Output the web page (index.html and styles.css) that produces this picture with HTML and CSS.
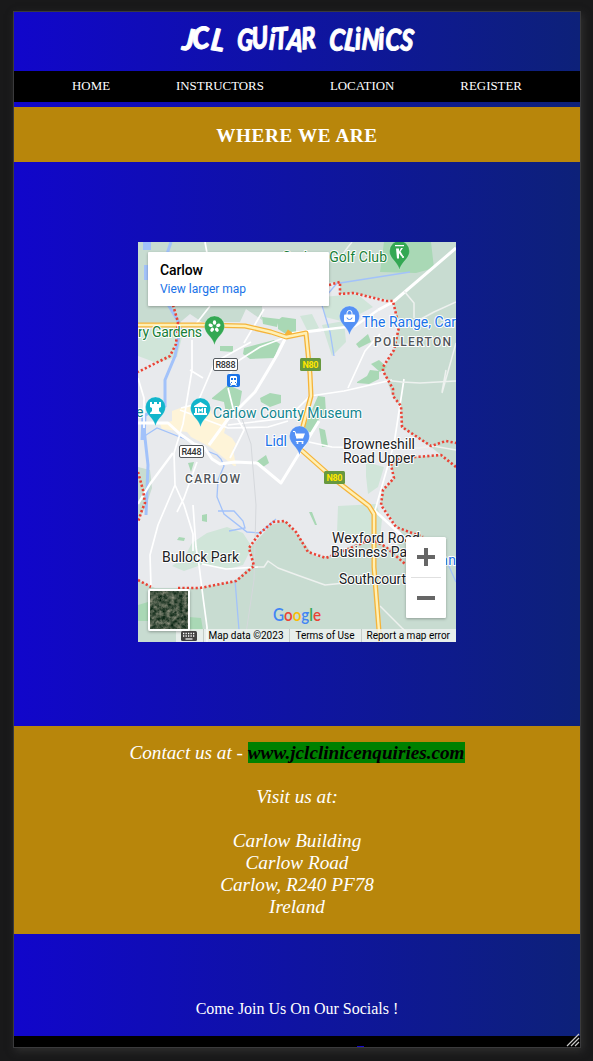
FILE: index.html
```html
<!DOCTYPE html>
<html lang="en">
<head>
<meta charset="utf-8">
<title>JCL Guitar Clinics - Location</title>
<link rel="stylesheet" href="styles.css">
</head>
<body>
<div class="window">
  <header class="banner">
    <h1 class="visual-title"><svg class="logo" viewBox="0 0 240 36" role="img" aria-label="JCL Guitar Clinics">
      <g transform="translate(4.5 28.5)">
        <text class="brush" x="0" y="0" rotate="8 -5 9" textLength="42" lengthAdjust="spacingAndGlyphs">JCL</text>
        <text class="brush" x="55" y="0" rotate="5 -6 4 -3 8 -5" textLength="80" lengthAdjust="spacingAndGlyphs">GUiTAR</text>
        <text class="brush" x="147" y="0" rotate="6 8 -3 4 -4 5 8" textLength="84" lengthAdjust="spacingAndGlyphs">CLiNiCS</text>
      </g>
    </svg></h1>
  </header>
  <nav class="menu">
    <a>HOME</a><a>INSTRUCTORS</a><a>LOCATION</a><a>REGISTER</a>
  </nav>
  <h2 class="heading">WHERE WE ARE</h2>
  <main class="map-section">
    <svg class="map" viewBox="138 242 318 400">
      <defs>
        <path id="pin" d="M0 0C-1.5-8-10-11-10-19a10 10 0 1 1 20 0C10-11 1.5-8 0 0z"/>
        <filter id="shadow" x="-20%" y="-20%" width="140%" height="150%"><feDropShadow dx="0" dy="1" stdDeviation="1.5" flood-opacity=".3"/></filter>
        <filter id="aerial" x="0" y="0" width="100%" height="100%" color-interpolation-filters="sRGB">
          <feTurbulence type="fractalNoise" baseFrequency=".24" numOctaves="4" seed="8"/>
          <feColorMatrix values=".8 0 0 0 -.13  .65 0 0 0 .01  .65 0 0 0 -.06  0 0 0 0 1"/>
        </filter>
      </defs>
      <rect x="138" y="242" width="318" height="400" fill="#e8eaed"/>
      <g fill="#c8dcd1">
        <path d="M138 242H456V642H138V580L155 588H200L235 581 253 563 250 548 271 525 285 521 298 535 314 556 326 557 358 543 372 540 390 548 406 540 381 503 383 490 394 478 391 465 402 460 416 457 441 455 431 447 402 428 401 407 393 397 383 370 394 350 399 327 393 301 354 293 340 294 340 283 298 281V306H262V320L246 309 240 322H202L190 314 177 325H138z"/>
        <path d="M138 467L150 470 152 488 146 506 138 520z"/>
      </g>
      <g fill="#d0e5d9">
        <path d="M138 332l18-4 20-3 6 12-5 20-20 6-19-7zM300 316l12-2 7 14-11 4zM322 297l35-3 16 13-28 15-20-5zM322 325l22-4 2 21-14 14zM184 558l8-15 15-10 20-6 16 6 9 14-9 18-14 4-25-5-20 7-12-5zM350 536l-16-20zM366 462l18 5-6 20-10 7-2-18zM338 506l38-2 6 15-2 20-43-6z"/>
      </g>
      <g fill="#a9d8b5">
        <path d="M380 272l4-30h47l3 26-18 5zM262 317l17 2-2 8-14-3zM278 320l4-3 14 2v16l-10-1-8-5zM220 346h13v6l-13-1zM244 348l30-8 6 4-6 14-24 1-7-5zM212 398l16-13 14 6-3 18-13 4-2-11-12-3zM260 398l10-5 11 2v8l-11 4-9-5zM356 344l12-10 3 8-12 6zM371 364l8-4 8 7-7 5zM357 382l10-6 3-6 9 1v8l-10 5-12-1zM318 396l7 1 1 16-7 6-6 14-10-3zM319 428l6 2 3 16-6 1zM256 462l10-7 3 8-6 4zM188 463l6-1-3 10zM202 515l5-1v8l-5-1zM179 537l6 1-1 3-7-1zM309 512l3 0 5 13-2 0zM138 605l10-3v19h-10zM189 617l12 1 2 12-13 1z"/>
      </g>
      <path fill="#fef4d8" d="M172 411l14-5 24-1 2 9 16 5-4 14 8 5 4 6-3 5 3 17-2 0-24-19-19-10-4-5-25-3-2-5 12-3z"/>
      <g fill="none" stroke="#a2c2fa">
        <path stroke-width="8" d="M147 242v8M148 265v15"/>
        <path stroke-width="3" d="M171 242l-4 12M166 301l15 25-6 30-10 24v26l-22 10 2 22 3 27-2 50"/>
        <path stroke-width="5" d="M144 415l-1 25"/>
        <path stroke-width="1.300" d="M143 437l14-9 28 11 22 12 10 4 4 4 3 7-6 14-1 17 7 17 23 18 13 1 16-14M218 511l16 0 9 10 2 7-16 3M340 283l70-11M338 282l-17 20 9 30 4 24M235 580l4 50M447 562l9 20"/>
      </g>
      <g fill="none" stroke="#fff" stroke-width="1.700" stroke-linejoin="round">
        <path stroke-width="3" d="M456 248l-63 54-15 8M321 330l-34 4M286 337l-9 18-10 17-12 20-27 27-19 26M138 423h30l12 11 14 10 10 3 8 12 8 5 15-2 22 1 24 20 38-62"/>
        <path stroke-width="2.400" d="M378 310l-23 16-34 4M173 453l-23 31-12 20M374 510l24 22 28 24"/>
        <path d="M205 242l2 11M210 306l-14 18M192 340v30l-9 54-9 29M190 370l13 8M138 378l6 20v30M251 342l-36 20-18 42-16 4M244 343l20-34M286 337l-26 10-22 14-10 16M180 410l48 18 40-1 20-6M228 388l6 24 10 18-14 28M228 425l60-7 22-22 34-5 48-11M174 453l1 32 9 20 9 29v17M175 485l-17 40-8 30 1 32M197 462l-13 36-7 14M193 505l3 42 3 18 4 32 4 30v15M202 564l24 5 32-2M309 442l23 5 60 1M348 388l17-37 15-17M404 379l-10 65-20 70"/>
      </g>
      <g fill="none" stroke="#eef1ef" stroke-width="1.500" stroke-linejoin="round">
        <path d="M404 291l10 12v15M456 302l-22 10-26 14M456 343l-14 50M446 370l-4 22M384 380l18 2 18 1 36-2M392 448h27l14-2 23 4M258 567l6 0 4-6 10 7 19 7 28 10 30-3M380 606l22 22 16 14M340 258l8-11 4-5"/>
      </g>
      <g fill="none" stroke="#d5d8dc"><path d="M239 410l12 34 5 61-2 75-9 60"/></g>
      <g fill="none" stroke-linejoin="round">
        <path stroke="#f5b43a" stroke-width="5" d="M138 325l62 0 45 1 26 6 15 5 20-4 4 41 1 22-8 30-4 22 35 31 35 27 5 8v53l5 64 2 14M286 337l4-6"/>
        <path stroke="#fff0b5" stroke-width="2.400" d="M138 325l62 0 45 1 26 6 15 5 20-4 4 41 1 22-8 30-4 22 35 31 35 27 5 8v53l5 64 2 14"/>
        <path class="boundary" d="M173 305l5 17-2 22-6 12-32 16M138 472l5 18 2 13-3 7-4 12M138 580l13 7M178 588l22 0 36-7 18-15-5-18 10-14 14-12 12-1 11 11 12 20 18 6 32-13 13-6 15 8 19 17M329 285l11-3v12l14-1 32 8h7l6 26-5 23-11 17 0 4 10 18v7l8 10 1 21 29 19 15-5 10 2M456 467l-15-12-25 2-15 0-10 8 3 13-11 12-2 15 15 22 27 10"/>
      </g>
      <g class="place green">
        <text x="282" y="261.500" textLength="105">Carlow Golf Club</text>
        <text x="138" y="336.500" textLength="64">ry Gardens</text>
      </g>
      <g class="place blue">
        <text x="362" y="326.500" textLength="94">The Range, Car</text>
        <text x="265" y="446" textLength="22">Lidl</text>
        <text x="440" y="565" textLength="16">nn</text>
      </g>
      <g class="place teal">
        <text x="213" y="418" textLength="149">Carlow County Museum</text>
        <text x="136" y="417">e</text>
      </g>
      <g class="place area">
        <text x="343" y="449" textLength="72">Browneshill</text>
        <text x="343" y="463" textLength="72">Road Upper</text>
        <text x="162" y="562" textLength="77">Bullock Park</text>
        <text x="332" y="543" textLength="88">Wexford Road</text>
        <text x="331" y="556.500" textLength="88">Business Park</text>
        <text x="339" y="584" textLength="67">Southcourt</text>
      </g>
      <g class="district">
        <text x="374" y="346" textLength="77">POLLERTON</text>
        <text x="185" y="483" textLength="55">CARLOW</text>
      </g>
      <g fill="#fff" stroke="#555a5f">
        <rect x="213.500" y="358.500" width="24" height="12" rx="1.500"/><rect x="179.500" y="445.500" width="24" height="12" rx="1.500"/>
      </g>
      <g class="route"><text x="215.500" y="368" textLength="20">R888</text><text x="181.500" y="455" textLength="20">R448</text></g>
      <g fill="#67983f"><rect x="300" y="358" width="21" height="13" rx="1.500"/><rect x="324" y="471" width="21" height="13" rx="1.500"/></g>
      <g class="route national"><text x="302.500" y="368" textLength="16">N80</text><text x="326.500" y="481.200" textLength="16">N80</text></g>
      <g>
        <rect x="227" y="374" width="13" height="13" rx="2" fill="#1a73e8"/>
        <path fill="#fff" d="M231 376h5l1 1v6l-1 1 1 2h-1l-1-1h-3l-1 1h-1l1-2-1-1v-6z"/><path fill="#1a73e8" d="M231 378h2v2h-2zM234 378h2v2h-2zM231 382h1v1h-1zM235 382h1v1h-1z"/>
      </g>
      <g stroke="#fff" stroke-opacity=".35" stroke-width=".6">
        <use href="#pin" x="399.500" y="270" fill="#34a853"/><use href="#pin" x="214.500" y="345" fill="#34a853"/>
        <use href="#pin" x="349.500" y="335" fill="#5491f5"/><use href="#pin" x="299.500" y="455" fill="#5491f5"/>
        <use href="#pin" x="155.500" y="426" fill="#12b5cb"/><use href="#pin" x="200.500" y="427" fill="#12b5cb"/>
      </g>
      <g fill="#fff">
        <ellipse cx="214.500" cy="322.500" rx="1.700" ry="2.200"/>
        <ellipse cx="214.500" cy="322.500" rx="1.700" ry="2.200" transform="rotate(72 214.500 326.500)"/>
        <ellipse cx="214.500" cy="322.500" rx="1.700" ry="2.200" transform="rotate(144 214.500 326.500)"/>
        <ellipse cx="214.500" cy="322.500" rx="1.700" ry="2.200" transform="rotate(216 214.500 326.500)"/>
        <ellipse cx="214.500" cy="322.500" rx="1.700" ry="2.200" transform="rotate(288 214.500 326.500)"/>
        <rect x="344" y="314.500" width="11" height="7.500" rx="1"/>
        <path d="M150 402h2v2h2v-2h3v2h2v-2h2v5l-2 1v3l2 2v1h-11v-1l2-2v-3l-2-1z"/>
        <path d="M194 406l6.500-4 6.500 4v1h-13zM195 408h2v5h7v-5h2v5h1v2h-13v-2h1zM198 407.500l2.500 2 2.500-2v5h-1.500v-2l-1 1-1-1v2H198z"/>
        <path d="M295 433.500h10l-2 5h-6.500zM296.500 441h7v1h-8z"/><circle cx="297.500" cy="443" r="1"/><circle cx="302.500" cy="443" r="1"/>
        <path d="M395 245h9v1.300h-9zM396 248.500h3v10h-2zM401 248h2l-2.500 3.500 3 5h-2l-3-4z"/><circle cx="403" cy="257" r="1.100"/>
      </g>
      <g fill="none" stroke="#fff"><path d="M347 315v-2a2.500 2.500 0 0 1 5 0v2M293 431.500h2l2 7"/></g>
      <path d="M347 317.500a2.500 2 0 0 0 5 0" fill="none" stroke="#5491f5"/>
      <rect x="148" y="252" width="181" height="54" rx="1" fill="#fff" filter="url(#shadow)"/>
      <g class="card"><text class="card-name" x="160" y="275" textLength="43">Carlow</text><text class="card-link" x="160" y="293" textLength="86">View larger map</text></g>
      <path d="M176 629h280v13H176z" fill="#f1f4f3" fill-opacity=".75"/>
      <path d="M203.500 629v13M289.500 629v13M361.500 629v13" stroke="#c4ccc8"/>
      <rect x="148" y="589" width="42" height="42" rx="2" fill="#fff" filter="url(#shadow)"/>
      <rect x="150" y="591" width="38" height="38" filter="url(#aerial)"/>
      <rect x="181" y="631" width="16" height="10" rx="1.500" fill="#424242"/>
      <path d="M183 633.500h12M183 636h12" stroke="#fff" stroke-width="1.300" stroke-dasharray="1.300 1.200"/><path d="M185.500 639h7" stroke="#fff" stroke-width="1.200"/>
      <g class="legal">
        <text x="208.500" y="639" textLength="75">Map data ©2023</text><text x="295.500" y="639" textLength="59">Terms of Use</text><text x="366.500" y="639" textLength="83.500">Report a map error</text>
      </g>
      <text class="google" x="273" y="621" textLength="48" lengthAdjust="spacingAndGlyphs"><tspan fill="#4285f4">G</tspan><tspan fill="#ea4335">o</tspan><tspan fill="#fbbc04">o</tspan><tspan fill="#4285f4">g</tspan><tspan fill="#34a853">l</tspan><tspan fill="#ea4335">e</tspan></text>
      <rect x="406" y="537" width="40" height="81" rx="1.500" fill="#fff" filter="url(#shadow)"/>
      <path d="M411 577.500h30" stroke="#e0e0e0"/>
      <path d="M417 557h18M426 548v18M417 598h18" stroke="#666" stroke-width="4"/>
    </svg>
  </main>
  <address class="contact">
    Contact us at - <b class="site">www.jclclinicenquiries.com</b><br><br>
    Visit us at:<br><br>
    Carlow Building<br>Carlow Road<br>Carlow, R240 PF78<br>Ireland
  </address>
  <p class="socials">Come Join Us On Our Socials !</p>
  <footer class="footer"><span class="footer-mark"></span>
    <svg class="grip" viewBox="0 0 14 14"><path d="M1 13L13 1M5 13L13 5M9 13L13 9" fill="none" stroke="#c8c8c8" stroke-width="1.200"/></svg>
  </footer>
</div>
</body>
</html>
```
FILE: styles.css
```css
* { box-sizing: border-box; }
body {
  margin: 0;
  padding: 11px 12px 13px 13px;
  height: 1061px;
  overflow: hidden;
  background: #19191a;
  font-family: "Liberation Serif", "Times New Roman", serif;
  color: #fff;
}
.window {
  display: flex;
  flex-direction: column;
  width: 568px;
  height: 1037px;
  border: 1px solid #3a3a3c;
  background: linear-gradient(90deg, #1106cb, #0d2179);
  box-shadow: 2px 3px 8px #303030;
}
.banner { height: 59px; display: flex; justify-content: center; padding-top: 9px; }
.visual-title { margin: 0; height: 36px; }
.logo { display: block; width: 240px; height: 36px; overflow: visible; }
.brush {
  font: italic 900 30px Lato, "Open Sans", sans-serif;
  fill: #fff;
  stroke: #fff;
  stroke-width: 1px;
  stroke-linejoin: round;
}
.menu {
  height: 31px;
  background: #000;
  display: flex;
  align-items: center;
  justify-content: center;
  gap: 66px;
  font-size: 12.900px;
}
.heading {
  margin: 5px 0 0;
  height: 55px;
  line-height: 57px;
  background: #b8860b;
  text-align: center;
  font-size: 19.200px;
  font-weight: bold;
  letter-spacing: .6px;
}
.map-section { height: 564px; padding-top: 80px; display: flex; justify-content: center; align-items: flex-start; }
.map { display: block; width: 318px; height: 400px; }
.contact {
  height: 208px;
  padding-top: 16px;
  background: #b8860b;
  text-align: center;
  font-size: 19.200px;
  line-height: 22px;
  font-style: italic;
}
.site { background: green; color: #000; }
.socials { margin: 0; height: 102px; padding-top: 66px; text-align: center; font-size: 16px; line-height: 18px; }
.footer { position: relative; flex: 1; background: #000; display: flex; align-items: flex-end; padding-left: 343px; }
.footer-mark { width: 7px; height: 1px; background: #1306cb; }
.grip { position: absolute; right: 0; bottom: 0; width: 14px; height: 14px; }
.boundary { stroke: #ea4335; stroke-width: 2.600px; stroke-dasharray: 2.200px 2.200px; }
.place { font: 14px Roboto, sans-serif; paint-order: stroke; stroke: #fff; stroke-width: 2px; stroke-linejoin: round; }
.green { fill: #188038; }
.blue { fill: #1a73e8; }
.teal { fill: #11858e; }
.area { fill: #202124; }
.district { font: 500 12px Roboto, sans-serif; fill: #50555a; paint-order: stroke; stroke: #fff; stroke-width: 2px; }
.route { font: 500 9px Roboto, sans-serif; fill: #333; }
.national { fill: #ffe500; font-weight: 700; }
.card { font-family: Roboto, sans-serif; }
.card-name { font-size: 14px; font-weight: 500; fill: #000; }
.card-link { font-size: 12px; fill: #1a73e8; }
.legal { font: 10px Roboto, sans-serif; fill: #000; }
.google { font: 600 17px Lato, sans-serif; }
```
